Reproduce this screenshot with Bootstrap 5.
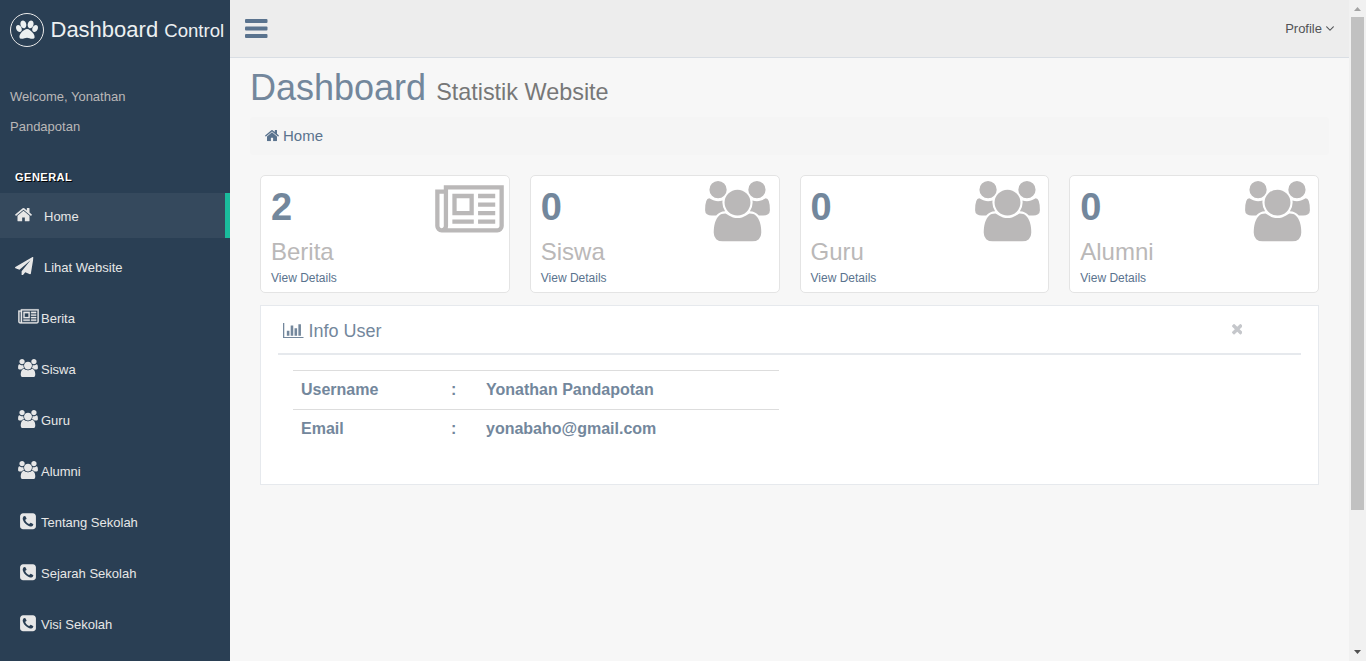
<!DOCTYPE html>
<html lang="id">
<head>
<meta charset="utf-8">
<meta name="viewport" content="width=device-width, initial-scale=1">
<title>Dashboard Control</title>
<link href="https://cdn.jsdelivr.net/npm/bootstrap@5.3.0/dist/css/bootstrap.min.css" rel="stylesheet">
<style>
body{font-family:"Liberation Sans",Arial,sans-serif;font-size:13px;line-height:1.471;color:#73879c;background:#f7f7f7;height:661px;overflow:hidden}
a{color:#5a738e;text-decoration:none}
svg{fill:currentColor;display:block;flex:none}
.side{width:230px;background:#2a3f54;color:#e7e7e7}
.brand{height:57px;padding:3px 0 0 10px;font-size:22px;color:#ecf0f1;line-height:54px;white-space:nowrap}
.brand small{font-size:18.6px}
.paw{width:34px;height:34px;border:1px solid #eaeaea;border-radius:50%;margin-right:6.5px;padding-bottom:2px}
.welcome{padding:25px 80px 0 10px;line-height:30px;color:#bab8b8;height:109px}
.section-name{font-size:11px;font-weight:700;letter-spacing:.5px;text-shadow:1px 1px #000;color:#fff;padding-left:15px;height:27px;line-height:22px}
.side-link{height:45px;margin-bottom:6px;padding:3px 0 0 15px;color:#e7e7e7;display:flex;align-items:center}
.side-link.current{background:#35495d;border-right:5px solid #1abb9c}
.ico{width:26px;display:flex;justify-content:center;align-items:center;height:20px;margin-top:-4px}
.ico.first{width:29px;justify-content:flex-start}
.ico-news{stroke:#e7e7e7;stroke-opacity:.45;stroke-width:50px}
.topbar{height:58px;background:#ededed;border-bottom:1px solid #d9dee4;padding:0 15px}
.profile{color:#515356;line-height:57px}
.page{padding:0 20px}
.page h1{font-size:36px;line-height:40px;font-weight:400;margin:10px 0 5px}
.page h1 small{font-size:23.4px;color:#777}
.crumbs{height:38px;background:#f5f5f5;border-radius:4px;padding:0 15px;font-size:15px}
.stats{padding-top:20px;margin:0 0 12px;--bs-gutter-x:20px}
.tile{height:118px;background:#fff;border:1px solid #e4e4e4;border-radius:5px;padding:0 10px;position:relative}
.tile .num{font-size:38px;font-weight:700;line-height:62px}
.tile h3{font-size:24px;line-height:26px;color:#bab8b8;margin:1px 0 0;font-weight:400}
.tile a{font-size:12px;line-height:18px;display:block;margin-top:4px}
.tile svg{position:absolute;color:#bab8b8;left:174.4px;top:5px}
.panel{height:180px;margin:0 10px;background:#fff;border:1px solid #e6e9ed;padding:10px 17px}
.panel-head{height:39px;border-bottom:2px solid #e6e9ed;padding:0 59px 8px 5px}
.panel-head h2{font-size:18px;font-weight:400;margin:0;line-height:22px}
.bars{margin-right:5px}
.close-x{color:#c5c7cb;margin-bottom:2px}
.info{width:486px;margin:15px 0 0 15px;font-size:16px;font-weight:700;color:#73879c;--bs-table-bg:transparent;--bs-table-color:#73879c;table-layout:fixed}
.info td{border:0;border-top:1px solid #ddd;padding:8px;line-height:22px;color:#73879c}
.scroll{width:17px;background:#f1f1f1}
.thumb{width:13px;height:493px;background:#c1c1c1}
.arrow-up{color:#a3a3a3}
.arrow-down{color:#505050}
</style>
</head>
<body class="d-flex">
<svg width="0" height="0" class="position-absolute">
<symbol id="home" viewBox="89 253 1614 1283"><path d="M1472 992v480q0 26-19 45t-45 19h-384v-384h-256v384h-384q-26 0-45-19t-19-45v-480q0-1 .5-3t.5-3l575-474 575 474q1 2 1 6zm223-69l-62 74q-8 9-21 11h-3q-13 0-21-7l-692-577-692 577q-12 8-24 7-13-2-21-11l-62-74q-8-10-7-23.5t11-21.5l719-599q32-26 76-26t76 26l244 204v-195q0-14 9-23t23-9h192q14 0 23 9t9 23v408l219 182q10 8 11 21.5t-7 23.5z"/></symbol>
<symbol id="plane" viewBox="0 0 1792 1792"><path d="M1764 11q33 24 27 64l-256 1536q-5 29-32 45-14 8-31 8-11 0-24-5l-453-185-242 295q-18 23-49 23-13 0-22-4-19-7-30.5-23.5t-11.500-36.500v-349l864-1059-1069 925-395-162q-37-14-40-55-2-40 32-59l1664-960q15-9 32-9 20 0 36 11z"/></symbol>
<symbol id="news" viewBox="0 0 2048 1792"><path d="M1024 512h-384v384h384v-384zm128 640v128h-640v-128h640zm0-768v640h-640v-640h640zm640 768v128h-512v-128h512zm0-256v128h-512v-128h512zm0-256v128h-512v-128h512zm0-256v128h-512v-128h512zm-1536 960v-960h-128v960q0 26 19 45t45 19 45-19 19-45zm1664 0v-1088h-1536v1088q0 33-11 64h1483q26 0 45-19t19-45zm128-1216v1216q0 80-56 136t-136 56h-1664q-80 0-136-56t-56-136v-1088h256v-128h1792z"/></symbol>
<symbol id="users" viewBox="0 0 1920 1792"><path d="M593 896q-162 5-265 128h-134q-82 0-138-40.500t-56-118.500q0-353 124-353 6 0 43.500 21t97.500 42.500 119 21.500q67 0 133-23-5 37-5 66 0 139 81 256zm1071 637q0 120-73 189.500t-194 69.500h-874q-121 0-194-69.500t-73-189.500q0-53 3.500-103.500t14-109 26.500-108.500 43-97.500 62-81 85.500-53.500 111.500-20q10 0 43 21.500t73 48 107 48 135 21.500 135-21.500 107-48 73-48 43-21.500q61 0 111.500 20t85.500 53.500 62 81 43 97.500 26.500 108.500 14 109 3.500 103.500zm-1024-1277q0 106-75 181t-181 75-181-75-75-181 75-181 181-75 181 75 75 181zm704 384q0 159-112.500 271.500t-271.500 112.500-271.500-112.500-112.500-271.500 112.500-271.500 271.500-112.500 271.500 112.500 112.500 271.500zm576 225q0 78-56 118.500t-138 40.500h-134q-103-123-265-128 81-117 81-256 0-29-5-66 66 23 133 23 59 0 119-21.500t97.500-42.500 43.500-21q124 0 124 353zm-128-609q0 106-75 181t-181 75-181-75-75-181 75-181 181-75 181 75 75 181z"/></symbol>
<symbol id="phone" viewBox="0 0 1536 1792"><path d="M1280 1193q0-11-2-16t-18-16.500-40.500-25-47.500-26.500-45.500-25-28.500-15q-5-3-19-13t-25-15-21-5q-15 0-36.500 20.500t-39.500 45-38.500 45-33.500 20.500q-7 0-16.500-3.500t-15.500-6.500-17-9.500-14-8.500q-99-55-170-126.500t-127-170.500q-2-3-8.500-14t-9.500-17-6.500-15.500-3.500-16.500q0-13 20.500-33.500t45-38.500 45-39.500 20.500-36.500q0-10-5-21t-15-25-13-19q-3-6-15-28.500t-25-45.500-26.500-47.500-25-40.500-16.500-18-16-2q-48 0-101 22-46 21-80 94.500t-34 130.500q0 16 2.500 34t5 30.500 9 33 10 29.500 12.500 33 11 30q60 164 216.500 320.500t320.500 216.500q6 2 30 11t33 12.500 29.500 10 33 9 30.500 5 34 2.500q57 0 130.500-34t94.500-80q22-53 22-101zm256-777v960q0 119-84.500 203.500t-203.500 84.500h-960q-119 0-203.500-84.500t-84.500-203.500v-960q0-119 84.500-203.500t203.500-84.500h960q119 0 203.500 84.500t84.500 203.500z"/></symbol>
</svg>
<nav class="side flex-shrink-0">
  <div class="brand d-flex align-items-center">
    <span class="paw d-flex align-items-center justify-content-center"><svg width="22" height="20.300" viewBox="0 128 1664 1536"><path d="M780 581q0 60-19 113.500t-63 92.500-105 39q-76 0-138-57.500t-92-135.500-30-151q0-60 19-113.500t63-92.500 105-39q77 0 138.500 57.500t91.500 135 30 151.500zm-342 340q0 80-42 139t-119 59q-76 0-141.500-55.500t-100.500-133.500-35-152q0-80 42-139.500t119-59.500q76 0 141.500 55.500t100.500 134 35 152.500zm394-27q118 0 255 97.500t229 237 92 254.500q0 46-17 76.500t-48.500 45-64.500 20-76 5.500q-68 0-187.500-45t-182.500-45q-66 0-192.500 44.500t-200.500 44.500q-183 0-183-146 0-86 56-191.500t139.500-192.500 187.500-146 193-59zm239-68q-61 0-105-39t-63-92.500-19-113.500q0-74 30-151.500t91.500-135 138.500-57.500q61 0 105 39t63 92.500 19 113.500q0 73-30 151t-92 135.500-138 57.500zm432-247q77 0 119 59.500t42 139.500q0 74-35 152t-100.500 133.500-141.500 55.500q-77 0-119-59t-42-139q0-74 35-152.500t100.500-134 141.500-55.500z"/></svg></span>
    <span>Dashboard <small>Control</small></span>
  </div>
  <div class="welcome">Welcome, Yonathan Pandapotan</div>
  <div class="section-name">GENERAL</div>
  <a class="side-link current" href="#"><span class="ico first"><svg width="17" height="13.400"><use href="#home"/></svg></span>Home</a>
  <a class="side-link" href="#"><span class="ico first"><svg width="18.500" height="18.500"><use href="#plane"/></svg></span>Lihat Website</a>
  <a class="side-link" href="#"><span class="ico"><svg class="ico-news" width="21" height="18"><use href="#news"/></svg></span>Berita</a>
  <a class="side-link" href="#"><span class="ico"><svg width="20" height="18.500"><use href="#users"/></svg></span>Siswa</a>
  <a class="side-link" href="#"><span class="ico"><svg width="20" height="18.500"><use href="#users"/></svg></span>Guru</a>
  <a class="side-link" href="#"><span class="ico"><svg width="20" height="18.500"><use href="#users"/></svg></span>Alumni</a>
  <a class="side-link" href="#"><span class="ico"><svg width="16" height="18.500"><use href="#phone"/></svg></span>Tentang Sekolah</a>
  <a class="side-link" href="#"><span class="ico"><svg width="16" height="18.500"><use href="#phone"/></svg></span>Sejarah Sekolah</a>
  <a class="side-link" href="#"><span class="ico"><svg width="16" height="18.500"><use href="#phone"/></svg></span>Visi Sekolah</a>
</nav>
<div class="flex-grow-1">
  <header class="topbar d-flex justify-content-between align-items-center">
    <a href="#" aria-label="Menu"><svg width="23" height="19" viewBox="0 0 23 19"><rect width="22.500" height="4" rx="1"/><rect y="7.500" width="22.500" height="4" rx="1"/><rect y="15" width="22.500" height="4" rx="1"/></svg></a>
    <a href="#" class="profile d-flex align-items-center">Profile<svg class="ms-1" width="8" height="5" viewBox="77 653 998 582"><path d="M1075 736q0 13-10 23l-466 466q-10 10-23 10t-23-10l-466-466q-10-10-10-23t10-23l50-50q10-10 23-10t23 10l393 393 393-393q10-10 23-10t23 10l50 50q10 10 10 23z"/></svg></a>
  </header>
  <main class="page">
    <h1>Dashboard <small>Statistik Website</small></h1>
    <div class="crumbs d-flex align-items-center"><a href="#" class="d-flex align-items-center"><svg class="me-1" width="14" height="11.200"><use href="#home"/></svg>Home</a></div>
    <div class="row stats">
      <div class="col-3"><div class="tile"><svg width="69" height="60"><use href="#news"/></svg><div class="num">2</div><h3>Berita</h3><a href="#">View Details</a></div></div>
      <div class="col-3"><div class="tile"><svg width="65" height="60.500"><use href="#users"/></svg><div class="num">0</div><h3>Siswa</h3><a href="#">View Details</a></div></div>
      <div class="col-3"><div class="tile"><svg width="65" height="60.500"><use href="#users"/></svg><div class="num">0</div><h3>Guru</h3><a href="#">View Details</a></div></div>
      <div class="col-3"><div class="tile"><svg width="65" height="60.500"><use href="#users"/></svg><div class="num">0</div><h3>Alumni</h3><a href="#">View Details</a></div></div>
    </div>
    <section class="panel">
      <div class="panel-head d-flex justify-content-between align-items-center">
        <h2 class="d-flex align-items-center"><svg class="bars" width="20.500" height="15.400" viewBox="0 128 2048 1536"><path d="M640 896v512h-256v-512h256zm384-512v1024h-256v-1024h256zm1024 1152v128h-2048v-1536h128v1408h1920zm-640-896v768h-256v-768h256zm384-384v1152h-256v-1152h256z"/></svg>Info User</h2>
        <svg class="close-x" width="10.500" height="10.500" viewBox="110 366 1188 1188"><path d="M1298 1322q0 40-28 68l-136 136q-28 28-68 28t-68-28l-294-294-294 294q-28 28-68 28t-68-28l-136-136q-28-28-28-68t28-68l294-294-294-294q-28-28-28-68t28-68l136-136q28-28 68-28t68 28l294 294 294-294q28-28 68-28t68 28l136 136q28 28 28 68t-28 68l-294 294 294 294q28 28 28 68z"/></svg>
      </div>
      <table class="table info">
        <colgroup><col width="150"><col width="35"><col></colgroup>
        <tbody>
          <tr><td>Username</td><td>:</td><td>Yonathan Pandapotan</td></tr>
          <tr><td>Email</td><td>:</td><td>yonabaho@gmail.com</td></tr>
        </tbody>
      </table>
    </section>
  </main>
</div>
<div class="scroll d-flex flex-column align-items-center flex-shrink-0">
  <svg class="arrow-up" width="7" height="17" viewBox="0 0 7 17"><path d="M0 11L3.500 7 7 11z"/></svg>
  <div class="thumb"></div>
  <svg class="arrow-down mt-auto" width="7" height="17" viewBox="0 0 7 17"><path d="M0 6h7L3.500 10z"/></svg>
</div>
<script src="https://cdn.jsdelivr.net/npm/bootstrap@5.3.0/dist/js/bootstrap.bundle.min.js"></script>
</body>
</html>
